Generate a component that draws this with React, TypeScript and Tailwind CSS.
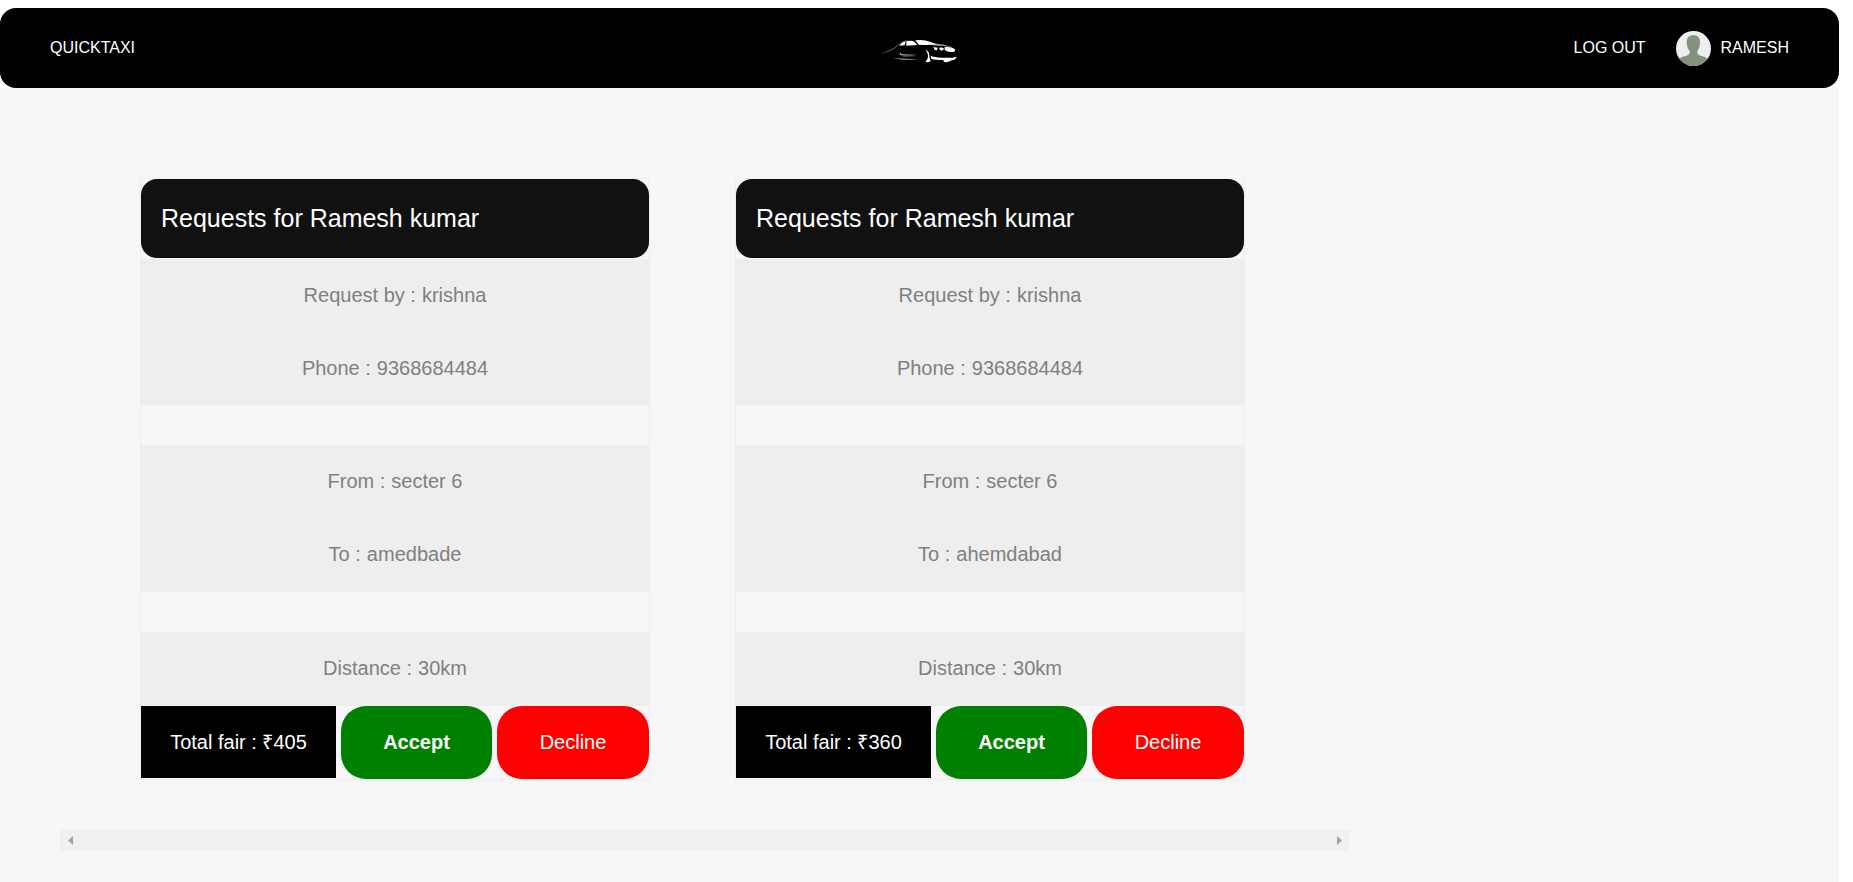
import React from "react";

type Ride = {
  requestedBy: string;
  phone: string;
  from: string;
  to: string;
  distance: string;
  fare: string;
};

const rides: Ride[] = [
  { requestedBy: "krishna", phone: "9368684484", from: "secter 6", to: "amedbade", distance: "30km", fare: "₹405" },
  { requestedBy: "krishna", phone: "9368684484", from: "secter 6", to: "ahemdabad", distance: "30km", fare: "₹360" },
];

function CarLogo() {
  return (
    <svg viewBox="0 -6 360 180" className="h-[60px] w-[120px]" fill="#fff" role="img" aria-label="Car">
      <path d="M62 101 Q92 91 108 80 Q125 61 150 60 Q120 66 109 82 Q92 95 62 101Z" opacity=".5" />
      <path d="M118 77 Q125 66 137 64 L134 76Z" />
      <path d="M139 64 Q155 60 163 65 L172 75 L139 77Z" />
      <path d="M166 61 Q192 58 210 65 L230 73 Q200 77 176 74Z" />
      <path d="M215 70 Q250 72 278 82 Q252 78 215 76Z" opacity=".6" />
      <path d="M220 81 L233 83 L231 91 L224 90Z" />
      <path d="M237 83 Q252 80 252 88 L245 92 Q238 90 237 83Z" />
      <path d="M254 81 Q276 79 285 88 Q286 96 279 96 Q262 97 254 90Z" />
      <path d="M196 89 Q210 93 208 110 L212 122 Q207 129 196 125 Q205 118 204 106 Q203 95 196 89Z" />
      <path d="M212 107 Q220 112 247 113 Q274 115 290 110 Q288 119 275 121 Q267 128 253 126 L249 120 Q226 120 214 117Z" />
      <path d="M120 95 L123 102 Q145 105 171 104 Q145 109 119 105Z" opacity=".7" />
      <path d="M98 115 Q137 116 175 119 Q136 121 98 115Z" opacity=".8" />
      <path d="M128 109 L171 110 L130 111Z" opacity=".4" />
    </svg>
  );
}

function Avatar() {
  return (
    <svg viewBox="0 0 105 105" className="size-[35px] rounded-full" aria-hidden="true">
      <rect width="105" height="105" fill="#eeeeee" />
      <path
        d="M52 13 C65 13 72 20 72 33 C73 47 68 55 64 60 C63 68 66 71 74 74 C87 78 94 79 100 88 V105 H5 V88 C11 79 18 78 31 74 C39 71 42 68 41 60 C36 55 32 47 32 33 C32 20 39 13 52 13Z"
        fill="#84917f"
      />
    </svg>
  );
}

function Details({ items }: { items: [string, string][] }) {
  return (
    <dl className="flex flex-col bg-[#eeeeee]">
      {items.map(([label, value]) => (
        <div key={label} className="flex flex-1 items-center justify-center gap-[6px] pb-[2px]">
          <dt>{label} :</dt>
          <dd>{value}</dd>
        </div>
      ))}
    </dl>
  );
}

function RequestCard({ ride }: { ride: Ride }) {
  return (
    <article className="flex-1 border border-[#eeeeee] text-xl text-[#808080]">
      <h2 className="mb-px flex h-[79px] items-center rounded-2xl bg-[#111111] px-5 text-[25px] text-white">
        Requests for Ramesh kumar
      </h2>
      <div className="grid grid-rows-[146px_147px_74px] gap-10">
        <Details items={[["Request by", ride.requestedBy], ["Phone", ride.phone]]} />
        <Details items={[["From", ride.from], ["To", ride.to]]} />
        <Details items={[["Distance", ride.distance]]} />
      </div>
      <div className="grid h-[73px] grid-cols-[195fr_151fr_152fr] gap-[5px] text-white">
        <p className="mb-px flex items-center justify-center bg-black">Total fair : {ride.fare}</p>
        <button type="button" className="rounded-[25px] bg-[#008000] pb-[2px] font-bold">Accept</button>
        <button type="button" className="rounded-[25px] bg-[#ff0000] pb-[2px]">Decline</button>
      </div>
    </article>
  );
}

export default function App() {
  return (
    <div className="flex min-h-screen flex-col bg-white pt-2 pr-[14px] font-['Liberation_Sans',Arial,sans-serif]">
      <header className="grid h-20 grid-cols-[1fr_auto_1fr] items-center rounded-2xl bg-black px-[50px] text-base text-white">
        <a href="#home" className="justify-self-start">QUICKTAXI</a>
        <CarLogo />
        <nav className="flex items-center justify-self-end">
          <a href="#logout" className="mr-[30px]">LOG OUT</a>
          <a href="#profile" className="flex items-center gap-[10px]">
            <Avatar />
            RAMESH
          </a>
        </nav>
      </header>
      <main className="grid flex-1 grid-cols-[1290fr_489fr] bg-[#f7f7f7] pl-[60px]">
        <section className="pt-[90px]" aria-label="Ride requests">
          <div className="flex gap-[85px] pr-[105px] pl-20">
            {rides.map((ride) => (
              <RequestCard key={ride.to} ride={ride} />
            ))}
          </div>
          <div className="mt-[50px] flex h-[21px] items-center justify-between bg-[#f0f0f0] px-2">
            <button type="button" aria-label="Scroll left">
              <svg viewBox="0 0 5 9" className="h-[9px] w-[5px]" fill="#a3a3a3"><path d="M5 0V9L0 4.500Z" /></svg>
            </button>
            <button type="button" aria-label="Scroll right">
              <svg viewBox="0 0 5 9" className="h-[9px] w-[5px]" fill="#a3a3a3"><path d="M0 0V9L5 4.500Z" /></svg>
            </button>
          </div>
        </section>
      </main>
    </div>
  );
}
